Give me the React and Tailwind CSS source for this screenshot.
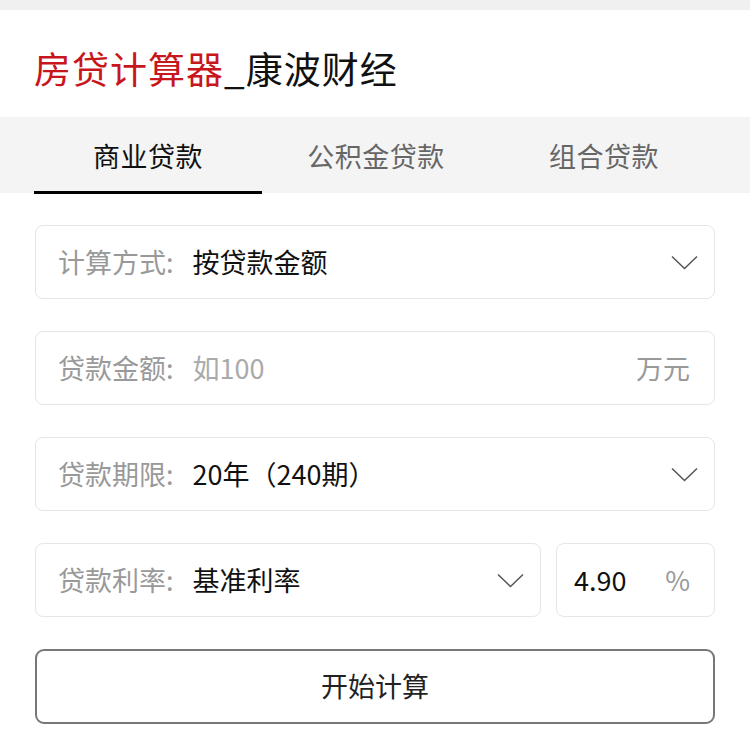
import { useState } from 'react'

const FONT = { fontFamily: '"Noto Sans CJK SC", "Noto Sans", sans-serif' }

const TABS = ['商业贷款', '公积金贷款', '组合贷款']

function Chevron({ className = '' }) {
  return (
    <svg width="27" height="15" viewBox="0 0 27 15" className={className} fill="none">
      <path d="M1 1.5 L13.5 13.5 L26 1.5" stroke="#555" strokeWidth="1.5" />
    </svg>
  )
}

function Field({ label, children, right, className = '' }) {
  return (
    <div className={`h-[74px] flex items-center pl-[22px] pr-[16px] border border-[#e6e6e6] rounded-[8px] bg-white ${className}`}>
      <span className="text-[27px] text-[#999] whitespace-nowrap">{label}:</span>
      <div className="ml-[19px] flex-1 text-[27px] text-[#111] whitespace-nowrap">{children}</div>
      {right}
    </div>
  )
}

export default function App() {
  const [tab, setTab] = useState(0)

  return (
    <div className="w-[750px] h-[741px] bg-white overflow-hidden" style={FONT}>
      <div className="h-[10px] bg-[#f0f0f0]" />

      {/* Title */}
      <header className="h-[107px] flex items-center pl-[34px] pt-[10px]">
        <h1 className="text-[37px] leading-none tracking-[1px]">
          <span className="text-[#c8161d]">房贷计算器</span>
          <span className="text-[#111]">_康波财经</span>
        </h1>
      </header>

      {/* Tabs */}
      <nav className="h-[76px] bg-[#f4f4f4] grid grid-cols-3 pl-[34px] pr-[32px]">
        {TABS.map((t, i) => (
          <button
            key={t}
            onClick={() => setTab(i)}
            className={
              'relative text-[27px] pt-[2px] tracking-[0.5px] ' +
              (tab === i ? 'text-[#111]' : 'text-[#666]')
            }
          >
            {t}
            {tab === i && <span className="absolute left-0 right-0 bottom-[-1px] h-[3px] bg-black" />}
          </button>
        ))}
      </nav>

      {/* Form */}
      <div className="px-[35px] pt-[32px] flex flex-col gap-[32px]">
        <Field label="计算方式" right={<Chevron />}>按贷款金额</Field>

        <Field label="贷款金额" right={<span className="text-[27px] text-[#999] pr-[8px]">万元</span>}>
          <span className="text-[#aaa]">如100</span>
        </Field>

        <Field label="贷款期限" right={<Chevron />}>20年（240期）</Field>

        <div className="flex gap-[15px]">
          <Field label="贷款利率" right={<Chevron />} className="flex-1">基准利率</Field>
          <div className="w-[159px] h-[74px] flex items-center justify-between pl-[17px] pr-[24px] border border-[#e6e6e6] rounded-[8px]">
            <span className="text-[27px] text-[#111]">4.90</span>
            <span className="text-[27px] text-[#999]">%</span>
          </div>
        </div>

        <button className="h-[75px] border-2 border-[#777] rounded-[9px] text-[27px] text-[#222]">
          开始计算
        </button>
      </div>
    </div>
  )
}
